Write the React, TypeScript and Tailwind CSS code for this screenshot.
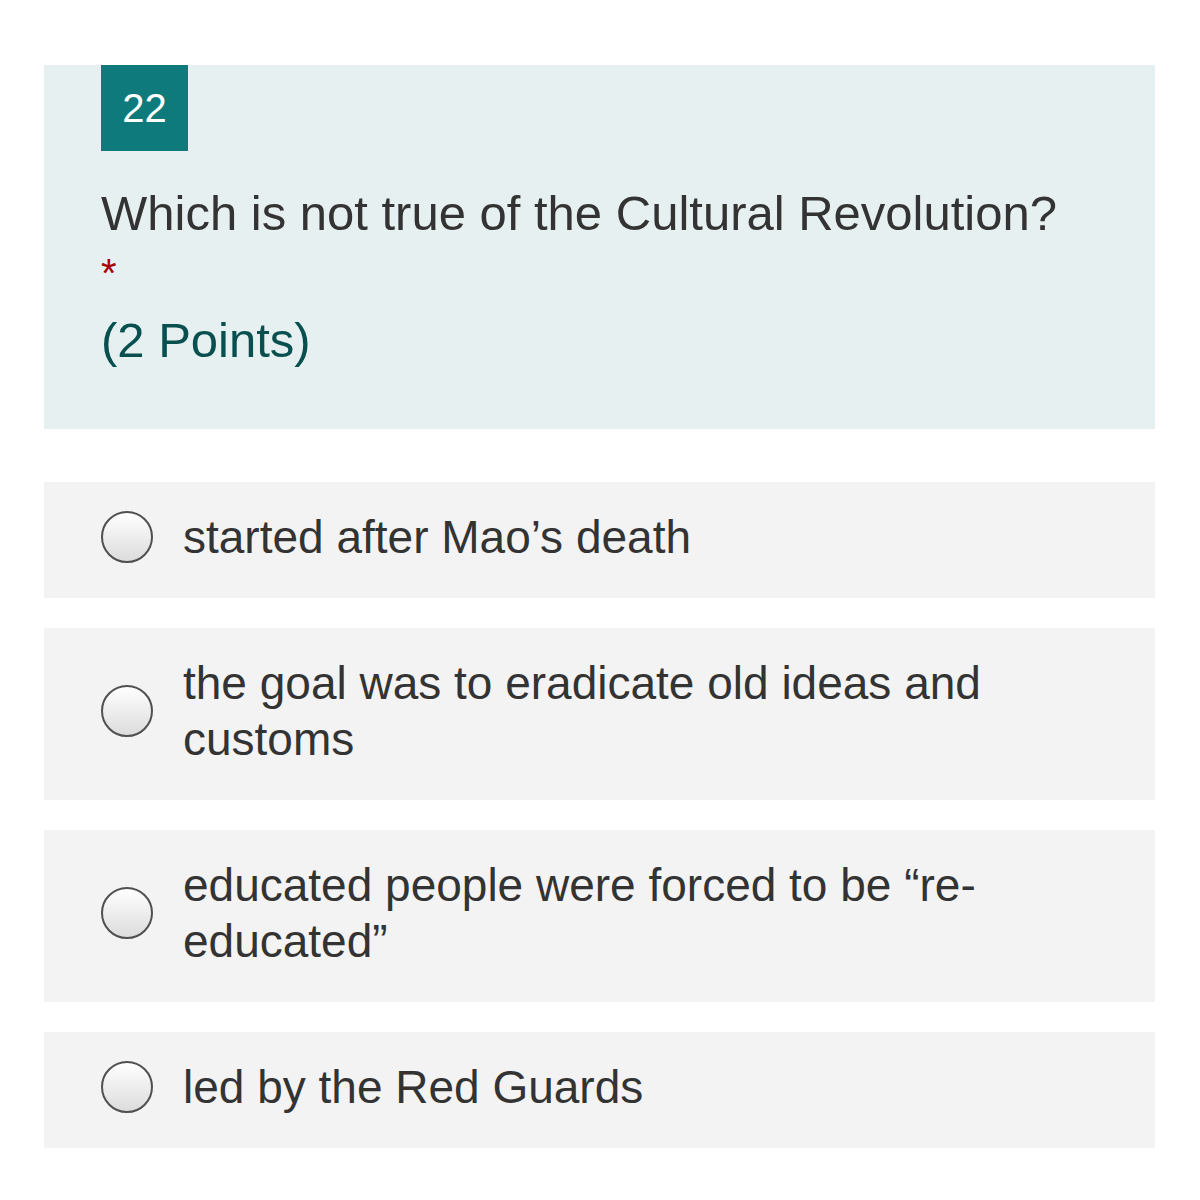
import React from 'react';

const options = [
  'started after Mao’s death',
  'the goal was to eradicate old ideas and customs',
  'educated people were forced to be “re-educated”',
  'led by the Red Guards',
];

function Radio() {
  return (
    <span className="block h-[52px] w-[52px] flex-shrink-0 rounded-full border-[2.5px] border-[#505050] bg-gradient-to-b from-white to-[#dcdcdc]"></span>
  );
}

export default function App() {
  return (
    <div
      className="min-h-[1200px] w-full bg-white pt-[65px]"
      style={{ fontFamily: '"Liberation Sans", Arial, sans-serif' }}
    >
      <div className="ml-[44px] w-[1111px]">
        <div className="bg-[#e7f0f1] px-[57px] pb-[59px]">
          <div className="flex h-[86px] w-[87px] items-center justify-center bg-[#0e7a7b] text-[40px] text-white">
            22
          </div>
          <div className="mt-[32px] text-[49px] leading-[60px] text-[#333333]">
            Which is not true of the Cultural Revolution?
          </div>
          <div className="text-[40px] leading-[60px] text-[#a80000]">*</div>
          <div className="mt-[7px] text-[49px] leading-[60px] text-[#084f4f]">
            (2 Points)
          </div>
        </div>

        <div className="mt-[53px] flex flex-col gap-[30px]">
          {options.map((opt) => (
            <div
              key={opt}
              className="flex items-center gap-[30px] bg-[#f3f3f3] pl-[57px] pr-[57px] pt-[27px] pb-[33px]"
            >
              <Radio />
              <span className="text-[46px] leading-[56px] text-[#333333]">{opt}</span>
            </div>
          ))}
        </div>
      </div>
    </div>
  );
}
